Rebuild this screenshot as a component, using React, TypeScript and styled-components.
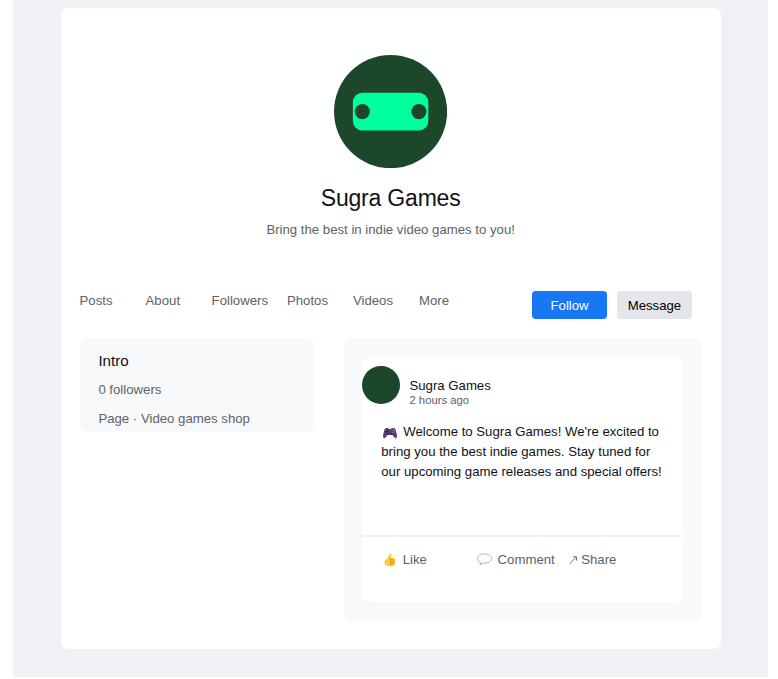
import React from "react";
import styled, { createGlobalStyle } from "styled-components";

const GlobalStyle = createGlobalStyle`
  * { box-sizing: border-box; }
  body {
    margin: 0;
    background: #fff;
    color: #111214;
    font-family: "Liberation Sans", Arial, sans-serif;
    font-size: 13.2px;
  }
  h1, h2, p { margin: 0; font-weight: 400; }
  button { font: inherit; border: 0; padding: 0; background: none; }
`;

const Page = styled.div`
  width: 754.3px;
  height: 677.3px;
  margin-left: 13.4px;
  padding: 8px 47.1px 0 47.2px;
  background: #f0f1f5;
`;

const Card = styled.main`
  height: 641px;
  border-radius: 7.5px;
  background: #fff;
  padding: 46.9px 18.9px 0 19px;
`;

const Profile = styled.header`
  display: flex;
  flex-direction: column;
  align-items: center;
  height: 236px;
`;

const Logo = styled.svg`
  display: block;
  flex: none;
  width: 113.2px;
  height: 113.2px;
`;

const Name = styled.h1`
  margin-top: 16px;
  font-size: 23px;
  line-height: 28px;
  letter-spacing: -0.2px;
  white-space: nowrap;
`;

const Tagline = styled.p`
  margin-top: 10px;
  line-height: 16px;
  color: #606266;
  white-space: nowrap;
`;

const NavRow = styled.div`
  display: flex;
  align-items: flex-start;
  justify-content: space-between;
  height: 46.8px;
  padding-right: 9.5px;
`;

const Tabs = styled.nav`
  display: grid;
  grid-template-columns: 66px 66px 75.4px 66px 66px 60px;
  padding-top: 2px;
  line-height: 16px;
  color: #606266;
`;

const Actions = styled.div`
  display: flex;
  gap: 9.4px;
`;

const Button = styled.button<{ $primary?: boolean }>`
  width: 75.5px;
  height: 28.3px;
  border-radius: 3.8px;
  padding-top: 1px;
  background: ${(p) => (p.$primary ? "#1877f2" : "#e4e6eb")};
  color: ${(p) => (p.$primary ? "#fff" : "#000")};
`;

const Columns = styled.div`
  display: flex;
  align-items: flex-start;
  gap: 28.3px;
`;

const Panel = styled.section<{ $width: number; $height: number }>`
  flex: none;
  width: ${(p) => p.$width}px;
  height: ${(p) => p.$height}px;
  padding: 19px 18.8px;
  border-radius: 7.5px;
  background: #f7f9fb;
`;

const Intro = styled(Panel)`
  padding-top: 14px;
  color: #606266;
  line-height: 16px;

  h2 {
    color: #111214;
    font-size: 15.1px;
    line-height: 18px;
  }
  p { margin-top: 12px; }
  p + p { margin-top: 13px; }
`;

const Post = styled.article`
  height: 245px;
  border-radius: 7.5px;
  background: #fff;
  padding-top: 9.2px;
`;

const Author = styled.div`
  display: flex;
  gap: 9.4px;
  height: 56.1px;
`;

const Avatar = styled.div`
  width: 37.7px;
  height: 37.7px;
  border-radius: 50%;
  background: #1c472a;
`;

const Byline = styled.div`
  padding-top: 12px;
  line-height: 15px;
`;

const Time = styled.div`
  font-size: 11.3px;
  color: #606266;
`;

const Message = styled.p`
  height: 112.8px;
  padding-left: 18.9px;
  line-height: 20px;
  white-space: nowrap;

  svg { margin: 0 6px 0 2px; vertical-align: -3px; }
`;

const Reactions = styled.footer`
  display: grid;
  grid-template-columns: 93.8px 92.2px 70px;
  padding: 14px 0 0 20.9px;
  border-top: 2px solid #eff0f2;
  color: #606266;
`;

const Reaction = styled.button<{ $gap: number }>`
  display: flex;
  align-items: center;
  gap: ${(p) => p.$gap}px;
  height: 18px;
  color: inherit;
`;

const ControllerIcon = () => (
  <svg width="14" height="12" viewBox="0 0 14 12">
    <path d="M3 1h2l1 1h2l1-1h2l1.500 1.300L14 8.500c0 2-.7 3-1.800 2.800L9.500 8h-5l-2.700 3.300C.7 11.500 0 10.500 0 8.500l1.500-6.200z" fill="#5b3d70" />
    <path d="M2.500 4.500h3M4 3v3" stroke="#302643" strokeWidth="1" />
    <circle cx="5.500" cy="7" r="1.100" fill="#37294b" />
    <circle cx="8.700" cy="7" r="1.100" fill="#37294b" />
    <circle cx="10" cy="3" r=".7" fill="#3f9ed5" />
    <circle cx="11.500" cy="4.200" r=".7" fill="#e25268" />
    <circle cx="10" cy="5.400" r=".6" fill="#67ac78" />
  </svg>
);

const ThumbIcon = () => (
  <svg width="13" height="14" viewBox="0 0 13 14">
    <path d="M1.800 7.500 4.500 5.300 6.500 1c.4-1 2-.6 1.900.8L8 4.700l3 .3c1 .2 1.300 1 1 1.800.5.600.5 1.300 0 2 .4.700.2 1.500-.3 2 .1 1-.4 1.900-1.500 2.200-2 .5-4 .4-5.700-.3L2 11.700c-.6-1.200-.7-2.800-.2-4.200z" fill="#ffc83d" />
    <path d="M7.500 5.500v6.500M8 7h3.500M8 9h3.500M8 11h3" stroke="#e08f1f" strokeWidth=".9" fill="none" />
  </svg>
);

const BubbleIcon = () => (
  <svg width="15" height="13" viewBox="0 0 15 13">
    <path d="M3.500 9.300C1.500 8.500.5 7.200.5 5.500.5 2.700 3.500 1 7.500 1s7 1.700 7 4.500-3 4.500-7 4.500H6l-3 1.800z" fill="#fff" stroke="#b0b0b0" strokeWidth="1" />
  </svg>
);

const ArrowIcon = () => (
  <svg width="9" height="10" viewBox="0 0 9 10">
    <path d="M.7 9 7 2.200" fill="none" stroke="#707276" strokeWidth="1" />
    <path d="M3.800 1.800H7.500V5.500" fill="none" stroke="#707276" strokeWidth="1" />
  </svg>
);

const tabs = ["Posts", "About", "Followers", "Photos", "Videos", "More"];

export default function App() {
  return (
    <>
      <GlobalStyle />
      <Page>
        <Card>
          <Profile>
            <Logo viewBox="0 0 120 120">
              <circle cx="60" cy="60" r="60" fill="#1c472a" />
              <rect x="20" y="40" width="80" height="40" rx="10" fill="#00ff9d" />
              <circle cx="30" cy="60" r="8" fill="#1c472a" />
              <circle cx="90" cy="60" r="8" fill="#1c472a" />
            </Logo>
            <Name>Sugra Games</Name>
            <Tagline>Bring the best in indie video games to you!</Tagline>
          </Profile>
          <NavRow>
            <Tabs>{tabs.map((t) => <span key={t}>{t}</span>)}</Tabs>
            <Actions>
              <Button $primary>Follow</Button>
              <Button>Message</Button>
            </Actions>
          </NavRow>
          <Columns>
            <Intro $width={235.7} $height={94.3}>
              <h2>Intro</h2>
              <p>0 followers</p>
              <p>Page · Video games shop</p>
            </Intro>
            <Panel $width={358.2} $height={283}>
              <Post>
                <Author>
                  <Avatar />
                  <Byline>
                    <div>Sugra Games</div>
                    <Time>2 hours ago</Time>
                  </Byline>
                </Author>
                <Message>
                  <ControllerIcon />Welcome to Sugra Games! We're excited to<br />
                  bring you the best indie games. Stay tuned for<br />
                  our upcoming game releases and special offers!
                </Message>
                <Reactions>
                  <Reaction $gap={6.5}><ThumbIcon />Like</Reaction>
                  <Reaction $gap={5.5}><BubbleIcon />Comment</Reaction>
                  <Reaction $gap={3}><ArrowIcon />Share</Reaction>
                </Reactions>
              </Post>
            </Panel>
          </Columns>
        </Card>
      </Page>
    </>
  );
}
